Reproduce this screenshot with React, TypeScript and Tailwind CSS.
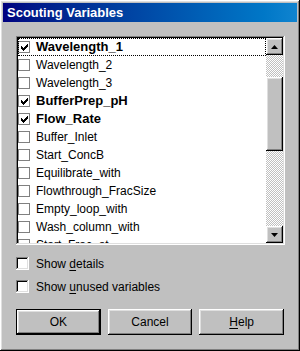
import React from 'react';

const raised =
  'shadow-[inset_-1px_-1px_#000000,inset_1px_1px_#ffffff,inset_-2px_-2px_#808080,inset_2px_2px_#dfdfdf]';
const sunken =
  'shadow-[inset_-1px_-1px_#ffffff,inset_1px_1px_#808080,inset_-2px_-2px_#dfdfdf,inset_2px_2px_#000000]';

const rows: { name: string; on: boolean }[] = [
  { name: 'Wavelength_1', on: true },
  { name: 'Wavelength_2', on: false },
  { name: 'Wavelength_3', on: false },
  { name: 'BufferPrep_pH', on: true },
  { name: 'Flow_Rate', on: true },
  { name: 'Buffer_Inlet', on: false },
  { name: 'Start_ConcB', on: false },
  { name: 'Equilibrate_with', on: false },
  { name: 'Flowthrough_FracSize', on: false },
  { name: 'Empty_loop_with', on: false },
  { name: 'Wash_column_with', on: false },
  { name: 'Start_Frac_at', on: false },
  { name: 'Elution_FracSize', on: false },
];

const Check = () => (
  <svg width="9" height="9" viewBox="0 0 9 9" className="block">
    <path d="M1 3h1v1h1v1h1V4h1V3h1V2h1V1h1v3H7v1H6v1H5v1H4v1H3V7H2V6H1z" fill="#000" />
  </svg>
);

const Arrow = ({ down }: { down?: boolean }) => (
  <svg width="7" height="4" viewBox="0 0 7 4" className="block">
    <path d={down ? 'M0 0h7L3.5 4z' : 'M3.5 0L7 4H0z'} fill="#000" />
  </svg>
);

const Row = ({ name, on, focus }: { name: string; on: boolean; focus?: boolean }) => (
  <div
    className={`h-[18px] shrink-0 flex items-center ${
      focus ? 'outline outline-1 outline-dotted outline-black -outline-offset-1' : ''
    }`}
  >
    <div className="ml-[0px] w-[12px] h-[12px] border border-[#808080] bg-white flex items-center justify-center">
      {on && <Check />}
    </div>
    <span className={`ml-[6px] whitespace-nowrap text-black ${on ? 'font-bold text-[13px]' : 'text-[12px]'}`}>
      {name}
    </span>
  </div>
);

const Option = ({ pre, u, post }: { pre: string; u: string; post: string }) => (
  <div className="flex items-center h-[13px]">
    <div className={`w-[13px] h-[13px] bg-white ${sunken}`} />
    <span className="ml-[7px] text-[12px] text-black">
      {pre}
      <span className="underline underline-offset-2">{u}</span>
      {post}
    </span>
  </div>
);

const Btn = ({ children, def }: { children: React.ReactNode; def?: boolean }) => (
  <div className={`w-[85px] h-[26px] ${def ? 'border border-black' : ''}`}>
    <div className={`w-full h-full flex items-center justify-center text-[12px] text-black ${raised}`}>
      {children}
    </div>
  </div>
);

export default function App() {
  return (
    <div
      className={`w-[300px] h-[351px] bg-[#c0c0c0] p-[3px] flex flex-col ${raised} font-['Liberation_Sans',Arial,sans-serif]`}
    >
      <div className="h-[19px] bg-linear-to-r from-[#000080] to-[#1084d0] flex items-center pl-[4px]">
        <span className="text-white font-bold text-[13px] leading-none">Scouting Variables</span>
      </div>

      <div className="px-[13px] flex flex-col">
        <div className={`mt-[14px] w-[269px] h-[209px] p-[2px] bg-white flex ${sunken}`}>
          <div className="flex-1 overflow-hidden flex flex-col">
            {rows.map((r, i) => (
              <Row key={r.name} name={r.name} on={r.on} focus={i === 0} />
            ))}
          </div>
          <div className="w-[17px] flex flex-col bg-[repeating-conic-gradient(#c0c0c0_0%_25%,#ffffff_0%_50%)] bg-[length:2px_2px]">
            <div className={`h-[17px] bg-[#c0c0c0] flex items-center justify-center ${raised}`}>
              <Arrow />
            </div>
            <div className="h-[22px]" />
            <div className={`h-[74px] bg-[#c0c0c0] ${raised}`} />
            <div className="flex-1" />
            <div className={`h-[17px] bg-[#c0c0c0] flex items-center justify-center ${raised}`}>
              <Arrow down />
            </div>
          </div>
        </div>

        <div className="mt-[12px] flex flex-col gap-[10px]">
          <Option pre="Show " u="d" post="etails" />
          <Option pre="Show " u="u" post="nused variables" />
        </div>

        <div className="mt-[16px] flex gap-[7px]">
          <Btn def>OK</Btn>
          <Btn>Cancel</Btn>
          <Btn>
            <span className="underline underline-offset-2">H</span>elp
          </Btn>
        </div>
      </div>
    </div>
  );
}
